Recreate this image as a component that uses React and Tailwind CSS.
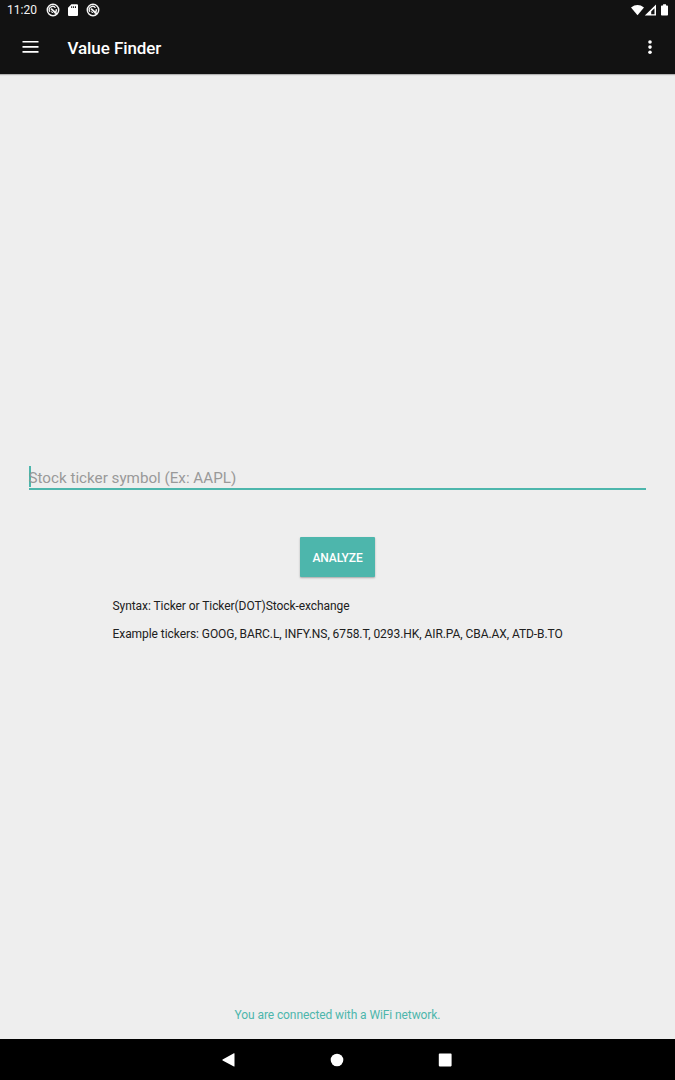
function SyncIcon() {
  return (
    <svg className="h-[14px] w-[14px]" viewBox="0 0 14 14" fill="none" stroke="#f4f4f4">
      <circle cx="7" cy="7" r="5.7" strokeWidth="1.5" />
      <path d="M4 8.9A3.3 3.3 0 0 1 9.5 4.8M10.2 6.2A3.2 3.2 0 0 1 8.4 9.9" strokeWidth="1.3" />
      <path d="M5 5.6L10.9 11" strokeWidth="1.8" />
      <path d="M5 8.6L7.2 9.8" strokeWidth="1" />
    </svg>
  );
}

function StatusBar() {
  return (
    <div className="flex h-[20px] items-center pl-[7px] pr-[6px] text-[#f4f4f4]">
      <span className="w-[38.5px] text-[12px] leading-[20px]">11:20</span>
      <SyncIcon />
      <svg className="ml-[8px] h-[14px] w-[10px]" viewBox="0 0 10 14">
        <path
          fill="#fff"
          fillRule="evenodd"
          d="M3.4 1.3H9Q10 1.3 10 2.3V11.9Q10 12.9 9 12.9H1Q0 12.9 0 11.9V4.7ZM3.2 3.3V4.9H4.2V3.3ZM5.1 3.3V4.9H6.1V3.3ZM7 3.3V4.9H8V3.3Z"
        />
      </svg>
      <span className="ml-[8.5px]">
        <SyncIcon />
      </span>
      <svg className="ml-auto h-[14px] w-[38px]" viewBox="0 0 38 14" fill="#fff">
        <path d="M0 4.4Q6.5-.5 13 4.4L6.5 12.3Z" />
        <path d="M25 1.5V12.6H13.8ZM23.5 5.2L20.2 8.6V11.2H23.5Z" fillRule="evenodd" />
        <path d="M32.1 1.2H35V2.5H36.2Q37 2.5 37 3.3V11.8Q37 12.6 36.2 12.6H30.8Q30 12.6 30 11.8V3.3Q30 2.5 30.8 2.5H32.1Z" />
      </svg>
    </div>
  );
}

function AppBar() {
  return (
    <div className="flex h-[54px] items-center pl-[22px] pr-[22.5px]">
      <svg className="h-[14px] w-[17px]" viewBox="0 0 17 14" fill="#fff">
        <path d="M.5 .9h16v1.7H.5zM.5 6h16v1.7H.5zM.5 11h16v1.7H.5z" />
      </svg>
      <h1 className="ml-[28.5px] mt-[1px] text-[17px] font-medium leading-[24px] tracking-[-0.08px] text-white">
        Value Finder
      </h1>
      <svg className="ml-auto h-[16px] w-[6px]" viewBox="0 0 6 16" fill="#fff">
        <circle cx="3" cy="3" r="1.8" />
        <circle cx="3" cy="8.1" r="1.8" />
        <circle cx="3" cy="13.2" r="1.8" />
      </svg>
    </div>
  );
}

export default function App() {
  return (
    <div className="flex h-[1080px] w-[675px] flex-col overflow-hidden bg-[#eeeeee] font-['Roboto',sans-serif]">
      <header className="h-[74px] shrink-0 bg-[#121212] shadow-[0_1px_1px_rgba(0,0,0,0.25)]">
        <StatusBar />
        <AppBar />
      </header>

      <main className="flex flex-1 flex-col items-center pt-[392px]">
        <div className="flex h-[24px] w-[617px] items-start border-b-2 border-[#4db6ac]">
          <span className="-mr-[2px] h-[21px] w-[2px] shrink-0 bg-[#4db6ac]" />
          <span className="-ml-[0.5px] text-[15.2px] leading-[24px] text-[#999999]">Stock ticker symbol (Ex: AAPL)</span>
        </div>

        <button className="mt-[47px] h-[40px] w-[75px] rounded-[1px] bg-[#4db6ac] pt-[1px] text-[12px] font-medium tracking-[-0.1px] text-white shadow-[0_1px_2px_rgba(0,0,0,0.3)]">
          ANALYZE
        </button>

        <div className="mt-[21px] w-[450px] whitespace-nowrap text-[12px] leading-[16px] tracking-[-0.065px] text-[#202020]">
          <p>Syntax: Ticker or Ticker(DOT)Stock-exchange</p>
          <p className="mt-[12px]">Example tickers: GOOG, BARC.L, INFY.NS, 6758.T, 0293.HK, AIR.PA, CBA.AX, ATD-B.TO</p>
        </div>

        <p className="mb-[16px] mt-auto text-[12px] leading-[16px] tracking-[-0.09px] text-[#4db6ac]">
          You are connected with a WiFi network.
        </p>
      </main>

      <nav className="flex h-[41px] shrink-0 items-center justify-center bg-black pr-[1px]">
        <svg className="h-[14px] w-[230px]" viewBox="0 0 230 14" fill="#fff">
          <path d="M.6 6.4L11.9.2Q12.5 0 12.5.6V13.2Q12.5 13.8 11.9 13.5L.6 7.4Q0 6.9.6 6.4Z" />
          <circle cx="115" cy="7" r="6.3" />
          <rect x="216.8" y=".6" width="12.8" height="12.8" rx=".8" />
        </svg>
      </nav>
    </div>
  );
}
